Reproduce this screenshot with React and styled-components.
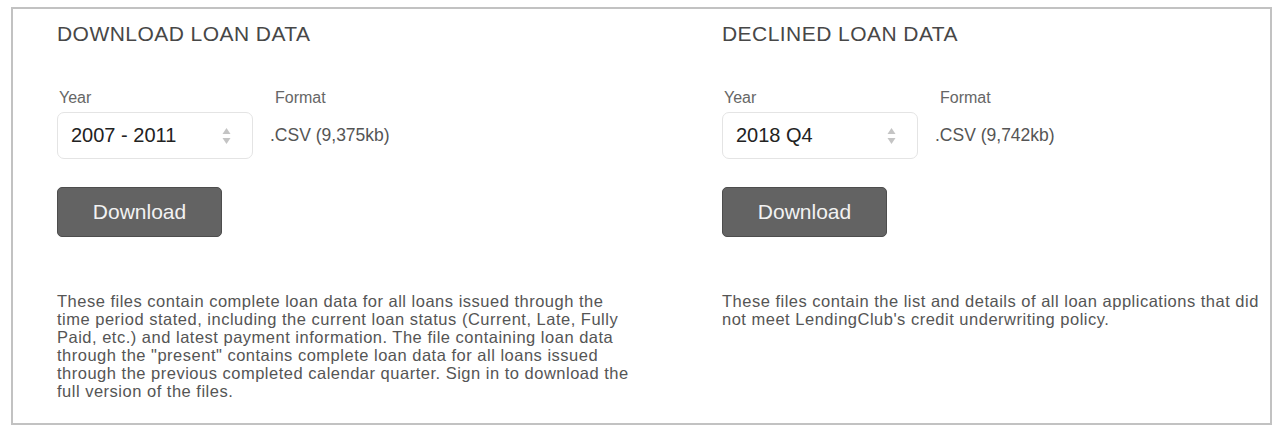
import React from "react";
import styled, { createGlobalStyle } from "styled-components";

const Global = createGlobalStyle`
  html, body { margin: 0; padding: 0; background: #fff; }
  body { font-family: "Liberation Sans", Arial, sans-serif; }
`;

const Page = styled.div`
  padding: 7px 6px 11px 11px;
`;

const Panel = styled.section`
  border: 2px solid #c2c2c2;
  height: 418px;
  box-sizing: border-box;
  padding: 13px 0 0 44px;
  display: grid;
  grid-template-columns: 665px 1fr;
`;

const Column = styled.div`
  display: flex;
  flex-direction: column;
`;

const Heading = styled.h2`
  margin: 0;
  font-size: 21px;
  line-height: 24px;
  font-weight: 400;
  color: #474747;
  letter-spacing: 0.45px;
`;

const Fields = styled.div`
  display: flex;
  gap: 20px;
  margin-top: 43px;
`;

const Field = styled.div`
  display: flex;
  flex-direction: column;
  gap: 5px;
`;

const Label = styled.label`
  font-size: 16px;
  line-height: 18px;
  color: #666;
  padding-left: ${(p) => p.$indent || 0}px;
`;

const SelectBox = styled.div`
  width: 196px;
  height: 47px;
  box-sizing: border-box;
  border: 1px solid #e4e4e4;
  border-radius: 7px;
  display: flex;
  align-items: center;
  justify-content: space-between;
  padding: 0 21px 0 13px;
  font-size: 20px;
  color: #222;
`;

const FormatValue = styled.div`
  height: 47px;
  display: flex;
  align-items: center;
  font-size: 17.5px;
  color: #555;
  margin-left: -3px;
`;

const Arrows = () => (
  <svg width="9" height="18" viewBox="0 0 9 18" aria-hidden="true">
    <path d="M4.5 1 L8.5 7 L0.5 7 Z" fill="#c4c4c4" />
    <path d="M4.5 17 L8.5 11 L0.5 11 Z" fill="#c4c4c4" />
  </svg>
);

const Button = styled.button`
  margin-top: 28px;
  width: 165px;
  height: 50px;
  box-sizing: border-box;
  background: #636363;
  border: 1px solid #4d4d4d;
  border-radius: 5px;
  color: #f2f2f2;
  font-family: "Liberation Sans", Arial, sans-serif;
  font-size: 21px;
  padding: 0 0 1px;
  cursor: pointer;
`;

const Text = styled.p`
  margin: 55px 0 0;
  max-width: ${(p) => p.$max}px;
  font-size: 16.5px;
  letter-spacing: 0.5px;
  line-height: 18px;
  color: #555;
`;

const Block = ({ title, year, size, text, max }) => (
  <Column>
    <Heading>{title}</Heading>
    <Fields>
      <Field>
        <Label $indent={2}>Year</Label>
        <SelectBox>
          <span>{year}</span>
          <Arrows />
        </SelectBox>
      </Field>
      <Field>
        <Label $indent={2}>Format</Label>
        <FormatValue>.CSV ({size})</FormatValue>
      </Field>
    </Fields>
    <Button>Download</Button>
    <Text $max={max}>{text}</Text>
  </Column>
);

export default function App() {
  return (
    <>
      <Global />
      <Page>
        <Panel>
          <Block
            title="DOWNLOAD LOAN DATA"
            year="2007 - 2011"
            size="9,375kb"
            max={580}
            text={
              'These files contain complete loan data for all loans issued through the time period stated, including the current loan status (Current, Late, Fully Paid, etc.) and latest payment information. The file containing loan data through the "present" contains complete loan data for all loans issued through the previous completed calendar quarter. Sign in to download the full version of the files.'
            }
          />
          <Block
            title="DECLINED LOAN DATA"
            year="2018 Q4"
            size="9,742kb"
            max={546}
            text="These files contain the list and details of all loan applications that did not meet LendingClub's credit underwriting policy."
          />
        </Panel>
      </Page>
    </>
  );
}
